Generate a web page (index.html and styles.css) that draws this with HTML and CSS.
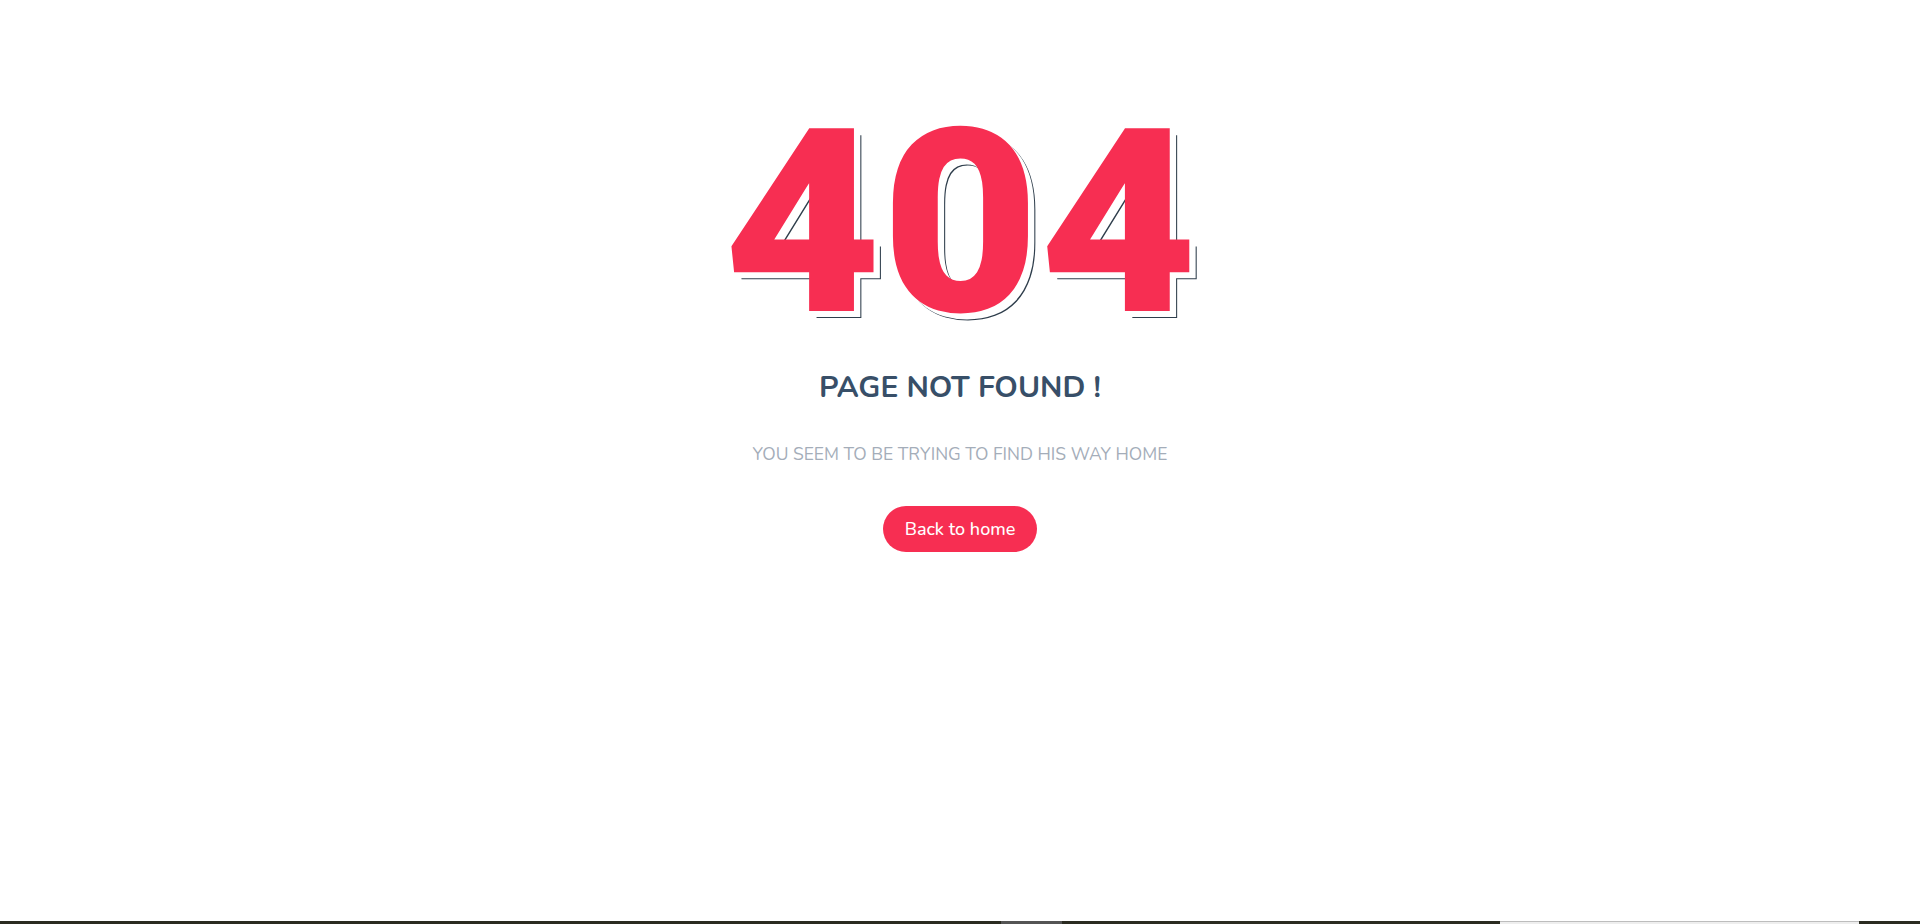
FILE: index.html
```html
<!DOCTYPE html>
<html lang="en">
<head>
<meta charset="utf-8">
<title>404</title>
<link rel="stylesheet" href="styles.css">
</head>
<body>
<main class="page">
  <div class="notfound">
    <h1 class="code">404</h1>
    <h2 class="title">PAGE NOT FOUND !</h2>
    <p class="lead">YOU SEEM TO BE TRYING TO FIND HIS WAY HOME</p>
    <a class="btn" href="#">Back to home</a>
  </div>
</main>
<div class="strip">
  <span class="seg dark s1"></span>
  <span class="seg grey s2"></span>
  <span class="seg dark s3"></span>
  <span class="seg light s4"></span>
  <span class="seg dark s5"></span>
</div>
</body>
</html>
```
FILE: styles.css
```css
html, body {
  margin: 0;
  padding: 0;
  height: 100%;
  background: #fff;
}
body {
  font-family: "Nunito", "Lato", "Open Sans", sans-serif;
  display: flex;
  flex-direction: column;
  overflow: hidden;
}
.page {
  flex: 1;
  display: flex;
  justify-content: center;
}
.notfound {
  display: flex;
  flex-direction: column;
  align-items: center;
  padding-top: 99px;
}
.code {
  margin: 0;
  height: 250px;
  font-family: "Roboto", "Inter", sans-serif;
  font-weight: 900;
  font-size: 257px;
  line-height: 250px;
  letter-spacing: 0;
  color: #f72e52;
  text-shadow: 6px 6px 0 #fff, 7px 7px 0 #2f3e4c;
  transform: scaleX(1.06);
}
.title {
  margin: 21px 0 0;
  font-size: 30px;
  font-weight: 700;
  color: #384f68;
  line-height: 1.2;
}
.lead {
  margin: 38px 0 0;
  font-size: 17.5px;
  color: #a4adb9;
  line-height: 1.2;
}
.btn {
  margin-top: 41px;
  display: inline-flex;
  align-items: center;
  justify-content: center;
  width: 154px;
  height: 46px;
  border-radius: 23px;
  background: #f72e52;
  color: #fff;
  font-size: 18px;
  font-weight: 500;
  text-decoration: none;
}
.strip {
  display: flex;
  height: 3px;
}
.seg { display: block; height: 3px; }
.dark { background: #2a2b20; }
.grey { background: #545454; }
.light { background: #eeeeee; box-shadow: inset 0 1px 0 #bdbdbd; }
.s1 { width: 1001px; }
.s2 { width: 61px; }
.s3 { width: 438px; }
.s4 { width: 359px; }
.s5 { flex: 1; }
```
